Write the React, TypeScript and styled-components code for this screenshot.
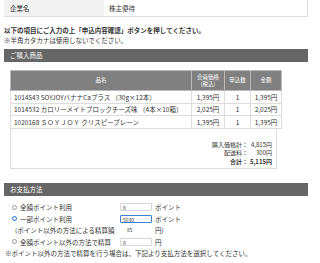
import React from 'react'
import styled, { createGlobalStyle } from 'styled-components'

const GlobalStyle = createGlobalStyle`
  body {
    margin: 0;
    background: #fff;
    color: #333;
    font-family: "Noto Sans CJK JP", "Noto Sans", sans-serif;
    font-size: 6.5px;
  }
`

const Page = styled.div`
  padding: 0 12px 0 4px;
`

const InfoRow = styled.div`
  display: flex;
  height: 16px;
  border-bottom: 1px solid #ddd;
  border-right: 1px solid #ddd;
`

const InfoLabel = styled.div`
  width: 94px;
  background: #f2f2f2;
  padding-left: 6px;
  display: flex;
  align-items: center;
`

const InfoValue = styled.div`
  padding-left: 5px;
  display: flex;
  align-items: center;
`

const Notice = styled.div`
  margin-top: 9px;
  line-height: 9.5px;
`

const Strong = styled.div`
  font-weight: 700;
`

const SectionTitle = styled.div<{ $gap: number }>`
  margin-top: ${p => p.$gap}px;
  height: 13px;
  line-height: 13px;
  background: #666;
  color: #fff;
  padding-left: 6px;
`

const ItemsWrap = styled.div`
  margin: 8px 31px 0 6px;
`

const Table = styled.table`
  width: 267px;
  border-collapse: collapse;
  table-layout: fixed;
`

const Th = styled.th<{ $w: number }>`
  width: ${p => p.$w}px;
  height: 19px;
  background: #808080;
  color: #fff;
  font-weight: 400;
  font-size: 5.5px;
  line-height: 7px;
  border: 1px solid #bbb;
  padding: 0;
`

const Td = styled.td<{ $align?: string }>`
  height: 11.5px;
  border: 1px solid #ddd;
  padding: 0 3px;
  text-align: ${p => p.$align || 'center'};
  white-space: nowrap;
  overflow: hidden;
`

const Totals = styled.div`
  border: 1px solid #ddd;
  border-top: none;
  height: 27px;
  padding: 12px 4px 0 0;
  display: grid;
  grid-template-columns: auto 24px;
  justify-content: end;
  grid-auto-rows: 8.5px;
  font-size: 6px;
  line-height: 8.5px;
  text-align: right;
`

const TotalCell = styled.span<{ $bold?: boolean }>`
  font-weight: ${p => (p.$bold ? 700 : 400)};
`

const PayList = styled.div`
  padding-top: 6px;
`

const PayRow = styled.div`
  display: grid;
  grid-template-columns: 108px 35px auto;
  align-items: center;
  height: 11.5px;
  padding-left: 8px;
`

const Choice = styled.label<{ $indent?: number }>`
  display: flex;
  align-items: center;
  gap: 3px;
  padding-left: ${p => p.$indent || 0}px;
`

const Radio = styled.span<{ $on?: boolean }>`
  width: 5px;
  height: 5px;
  border-radius: 50%;
  box-sizing: border-box;
  border: ${p => (p.$on ? '1.8px solid #1a73e8' : '0.7px solid #999')};
  background: #fff;
`

const Field = styled.span<{ $focus?: boolean; $plain?: boolean }>`
  display: block;
  width: 32px;
  height: 8px;
  line-height: 8px;
  box-sizing: border-box;
  padding-left: ${p => (p.$plain ? 7 : 2)}px;
  font-size: 5px;
  border: ${p => (p.$plain ? 'none' : p.$focus ? '1px solid #3b82d6' : '1px solid #d6d6d6')};
  border-radius: 1px;
`

const Note = styled.div`
  height: 11.5px;
  line-height: 11.5px;
  padding-left: 1px;
`

const items = [
  { name: '1014543 SOYJOYバナナCaプラス （30g×12本）', price: '1,395円', qty: 1, total: '1,395円' },
  { name: '1014532 カロリーメイトブロックチーズ味 （4本×10箱）', price: '2,025円', qty: 1, total: '2,025円' },
  { name: '1020168 ＳＯＹＪＯＹ クリスピープレーン', price: '1,395円', qty: 1, total: '1,395円' },
]

export default function App() {
  return (
    <Page>
      <GlobalStyle />
      <InfoRow>
        <InfoLabel>企業名</InfoLabel>
        <InfoValue>株主優待</InfoValue>
      </InfoRow>

      <Notice>
        <Strong>以下の項目にご入力の上「申込内容確認」ボタンを押してください。</Strong>
        <div>※半角カタカナは使用しないでください。</div>
      </Notice>

      <SectionTitle $gap={4}>ご購入商品</SectionTitle>
      <ItemsWrap>
        <Table>
          <thead>
            <tr>
              <Th $w={180}>品名</Th>
              <Th $w={32}>会員価格<br />(税込)</Th>
              <Th $w={25}>申込数</Th>
              <Th $w={30}>金額</Th>
            </tr>
          </thead>
          <tbody>
            {items.map(it => (
              <tr key={it.name}>
                <Td $align="left">{it.name}</Td>
                <Td>{it.price}</Td>
                <Td>{it.qty}</Td>
                <Td>{it.total}</Td>
              </tr>
            ))}
          </tbody>
        </Table>
        <Totals>
          <TotalCell>購入価格計：</TotalCell>
          <TotalCell>4,815円</TotalCell>
          <TotalCell>配送料：</TotalCell>
          <TotalCell>300円</TotalCell>
          <TotalCell $bold>合計：</TotalCell>
          <TotalCell $bold>5,115円</TotalCell>
        </Totals>
      </ItemsWrap>

      <SectionTitle $gap={14}>お支払方法</SectionTitle>
      <PayList>
        <PayRow>
          <Choice><Radio />全額ポイント利用</Choice>
          <Field>0</Field>
          <span>ポイント</span>
        </PayRow>
        <PayRow>
          <Choice><Radio $on />一部ポイント利用</Choice>
          <Field $focus>5030</Field>
          <span>ポイント</span>
        </PayRow>
        <PayRow>
          <Choice $indent={3}>(ポイント以外の方法による精算額</Choice>
          <Field $plain>85</Field>
          <span>円)</span>
        </PayRow>
        <PayRow>
          <Choice><Radio />全額ポイント以外の方法で精算</Choice>
          <Field>0</Field>
          <span>円</span>
        </PayRow>
        <Note>※ポイント以外の方法で精算を行う場合は、下記より支払方法を選択してください。</Note>
      </PayList>
    </Page>
  )
}
